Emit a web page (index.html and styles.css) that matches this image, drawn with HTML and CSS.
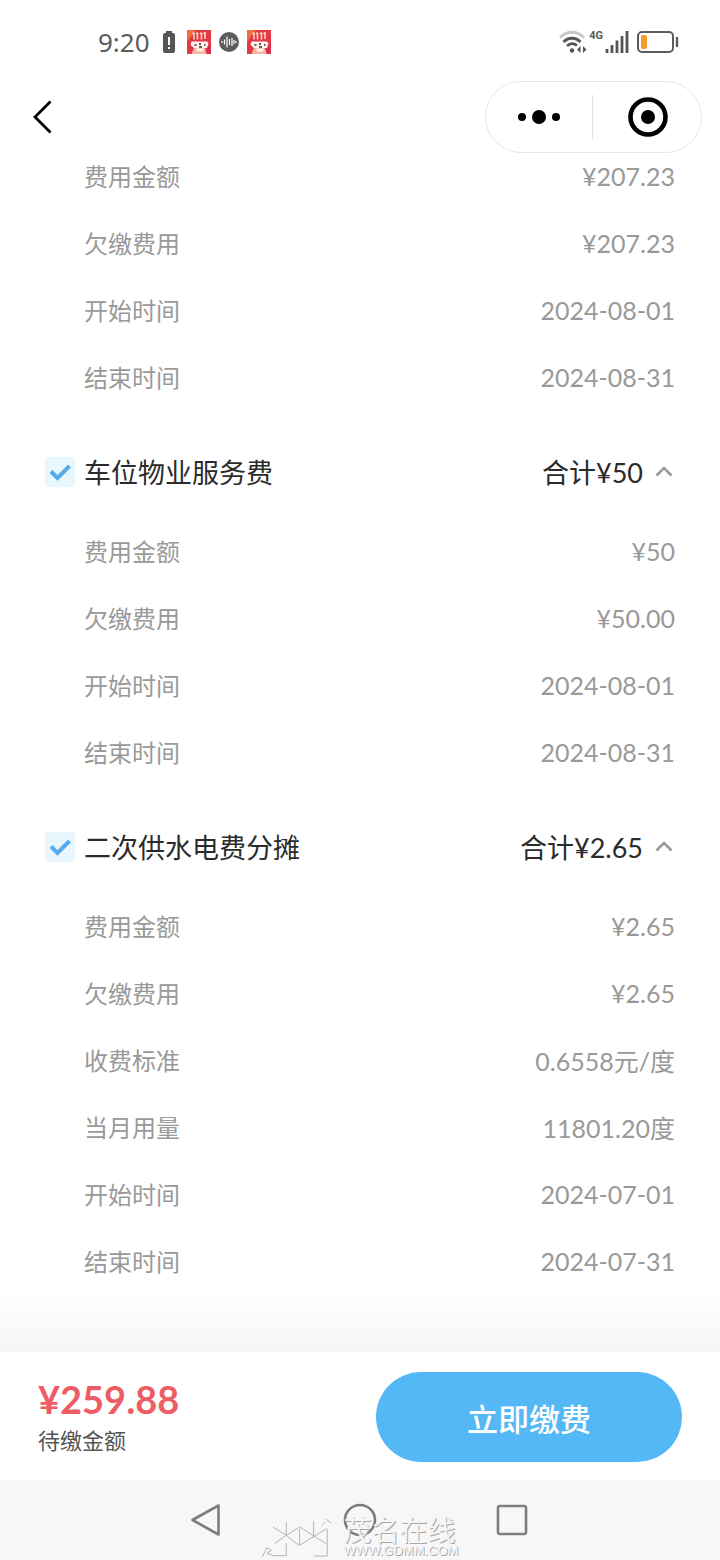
FILE: index.html
```html
<!DOCTYPE html>
<html lang="zh-CN">
<head>
    <meta charset="UTF-8">
    <meta name="viewport" content="width=device-width, initial-scale=1.0">
    <title>物业缴费</title>
    <link rel="stylesheet" href="styles.css">
</head>
<body>
    <svg class="sprite" width="0" height="0" aria-hidden="true">
        <symbol id="icon-sale" viewBox="0 0 24 24">
            <rect width="24" height="24" fill="#e23a44"/>
            <path d="M0 0h9L0 12z" fill="#f0703f"/>
            <path d="M24 12v12H14z" fill="#d92f4c"/>
            <path d="M7 2.500v7M10.500 2.500v7M14.500 2.500v7M18 2v7M5.500 4l1.500-1.500M9 4l1.500-1.500M13 4l1.500-1.500M16.500 4L18 2.500" fill="none" stroke="#ffd9c4" stroke-width="1.500"/>
            <path d="M4.500 11.500h15.500l1.500 2-1.500 4.500H7L3.500 15z" fill="#fff4ee"/>
            <path d="M7 18h11l1.500 6H4.500z" fill="#f9b5a4"/>
            <path d="M9 18.500h8l-1 3h-6z" fill="#fff0ea"/>
            <path d="M7.500 15h2M12 14h2M12 17h3M17 15h1.500" stroke="#3f2526" stroke-width="1.600"/>
        </symbol>
        <symbol id="icon-check" viewBox="0 0 30 30">
            <path d="M6 14.500l6.500 6.500L24.500 9" fill="none" stroke="#56aaea" stroke-width="4"/>
        </symbol>
        <symbol id="icon-up" viewBox="0 0 18 12">
            <path d="M1.500 9.500L9 2l7.500 7.500" fill="none" stroke="#999" stroke-width="2.600"/>
        </symbol>
    </svg>

    <!-- Status bar -->
    <div class="status-bar">
        <div class="status-group">
            <span class="clock">9:20</span>
            <svg width="17" height="24" viewBox="0 0 17 24">
                <path d="M4 1h6v2H4z" fill="#555"/>
                <rect x="1" y="3" width="12" height="20" rx="2" fill="#555"/>
                <path d="M7 7v8M7 17v2" stroke="#fff" stroke-width="2"/>
            </svg>
            <svg width="24" height="24"><use href="#icon-sale"/></svg>
            <svg width="20" height="22" viewBox="0 0 20 22">
                <circle cx="10" cy="11" r="10" fill="#5c5c5c"/>
                <path d="M3 10v2M5.500 8.500v5M8 5.500v11M10.500 8v6M13 7v8M15 9v4M17 10v2" stroke="#fff" stroke-width="1.200"/>
            </svg>
            <svg width="24" height="24"><use href="#icon-sale"/></svg>
        </div>
        <div class="status-group status-right">
            <svg width="28" height="24" viewBox="0 0 28 24">
                <g fill="none" stroke-width="2.800">
                    <path d="M1 7.500C8 .500 18 .500 25 7.500" stroke="#c8c8c8"/>
                    <path d="M4.500 12c5-5 12-5 17 0M8 16c3-3 7-3 10-.500" stroke="#555"/>
                </g>
                <circle cx="13" cy="20.500" r="2.200" fill="#555"/>
                <path d="M21.500 16v7l-3.500-3.500zM24 16v7l3.500-3.500z" fill="#555"/>
            </svg>
            <span class="network">4G</span>
            <svg class="signal" width="24" height="24" viewBox="0 0 24 24">
                <path d="M2 19v4M7 15v8M12 10.500V23M17 6v17M22 1v22" stroke="#555" stroke-width="2.800"/>
            </svg>
            <svg class="battery" width="42" height="24" viewBox="0 0 42 24">
                <rect x="1" y="2" width="35" height="20" rx="4" fill="none" stroke="#5c5c5c" stroke-width="2"/>
                <rect x="4" y="5" width="6" height="14" rx="2" fill="#f89a30"/>
                <path d="M40 7v10" stroke="#5c5c5c" stroke-width="2.400"/>
            </svg>
        </div>
    </div>

    <!-- Navigation bar with the capsule menu -->
    <header class="nav-bar">
        <button class="back" aria-label="返回">
            <svg width="22" height="36" viewBox="0 0 22 36">
                <path d="M19.500 2.500L4 18l15.500 15.500" fill="none" stroke="#000" stroke-width="2.800"/>
            </svg>
        </button>
        <div class="capsule">
            <button aria-label="更多">
                <svg width="44" height="16" viewBox="0 0 44 16">
                    <circle cx="5" cy="8" r="4"/>
                    <circle cx="22" cy="8" r="7"/>
                    <circle cx="39" cy="8" r="4"/>
                </svg>
            </button>
            <button aria-label="关闭">
                <svg width="40" height="40" viewBox="0 0 40 40">
                    <circle cx="20" cy="20" r="17.500" fill="none" stroke="#000" stroke-width="4.600"/>
                    <circle cx="20" cy="20" r="7"/>
                </svg>
            </button>
        </div>
    </header>

    <!-- Bill list, scrolled to the end -->
    <main class="bills">
        <section class="bill">
            <dl>
                <div><dt>费用金额</dt><dd>¥207.23</dd></div>
                <div><dt>欠缴费用</dt><dd>¥207.23</dd></div>
                <div><dt>开始时间</dt><dd>2024-08-01</dd></div>
                <div><dt>结束时间</dt><dd>2024-08-31</dd></div>
            </dl>
        </section>

        <section class="bill">
            <div class="bill-head">
                <label class="bill-name">
                    <input type="checkbox" checked>
                    <svg class="tick" width="30" height="30"><use href="#icon-check"/></svg>
                    车位物业服务费
                </label>
                <button class="total">合计¥50 <svg width="18" height="12"><use href="#icon-up"/></svg></button>
            </div>
            <dl>
                <div><dt>费用金额</dt><dd>¥50</dd></div>
                <div><dt>欠缴费用</dt><dd>¥50.00</dd></div>
                <div><dt>开始时间</dt><dd>2024-08-01</dd></div>
                <div><dt>结束时间</dt><dd>2024-08-31</dd></div>
            </dl>
        </section>

        <section class="bill">
            <div class="bill-head">
                <label class="bill-name">
                    <input type="checkbox" checked>
                    <svg class="tick" width="30" height="30"><use href="#icon-check"/></svg>
                    二次供水电费分摊
                </label>
                <button class="total">合计¥2.65 <svg width="18" height="12"><use href="#icon-up"/></svg></button>
            </div>
            <dl>
                <div><dt>费用金额</dt><dd>¥2.65</dd></div>
                <div><dt>欠缴费用</dt><dd>¥2.65</dd></div>
                <div><dt>收费标准</dt><dd>0.6558元/度</dd></div>
                <div><dt>当月用量</dt><dd>11801.20度</dd></div>
                <div><dt>开始时间</dt><dd>2024-07-01</dd></div>
                <div><dt>结束时间</dt><dd>2024-07-31</dd></div>
            </dl>
        </section>
        <div class="fade"></div>
    </main>

    <!-- Payment bar -->
    <footer class="pay-bar">
        <div class="pay-info">
            <div class="amount">¥259.88</div>
            <div class="amount-label">待缴金额</div>
        </div>
        <button class="pay-button">立即缴费</button>
    </footer>

    <!-- System navigation -->
    <nav class="system-nav">
        <button aria-label="后退">
            <svg width="36" height="36" viewBox="0 0 36 36"><path d="M28.500 3.500v29L2.500 18z"/></svg>
        </button>
        <button aria-label="主屏幕">
            <svg width="36" height="36" viewBox="0 0 36 36"><circle cx="18" cy="18" r="15"/></svg>
        </button>
        <button aria-label="最近任务">
            <svg width="36" height="36" viewBox="0 0 36 36"><rect x="4" y="4" width="28" height="28" rx="2"/></svg>
        </button>
        <div class="watermark">
            <svg width="70" height="40" viewBox="21 48 210 120">
                <path d="M23 165l14-28 14 8-14 8 16 7M53 161h42v-38M95 60v40M55 75l40 25 40-25M60 125l35-25 38 30M135 80v50l80-50M135 75l80 50M177 58v50M178 162h40V80M200 72l13-12M215 52l16 12"/>
            </svg>
            <div>
                <div class="watermark-name">茂名在线</div>
                <div class="watermark-url">WWW.GDMM.COM</div>
            </div>
        </div>
    </nav>
</body>
</html>
```
FILE: styles.css
```css
* {
    box-sizing: border-box;
}

body {
    margin: 0;
    height: 100vh;
    display: flex;
    flex-direction: column;
    background: #fff;
    color: #2b2b2b;
    font-family: Lato, "Noto Sans CJK SC", sans-serif;
}

button {
    padding: 0;
    border: none;
    background: none;
    color: inherit;
    font: inherit;
    cursor: pointer;
}

svg {
    display: block;
    flex: none;
}

dl, dd {
    margin: 0;
}

.sprite {
    position: absolute;
}

/* Status bar */
.status-bar {
    display: flex;
    justify-content: space-between;
    align-items: center;
    height: 81px;
    padding: 3px 41px 0 98px;
    color: #5c5c5c;
}

.status-group {
    display: flex;
    align-items: center;
    gap: 8px;
}

.clock {
    margin-right: 4px;
    font-family: "Noto Sans", sans-serif;
    font-size: 26px;
    line-height: 32px;
}

.status-right {
    gap: 2px;
}

.network {
    align-self: flex-start;
    font-family: Roboto, sans-serif;
    font-size: 11px;
    line-height: 12px;
    font-weight: bold;
}

.battery {
    margin-left: 6px;
}

/* Navigation bar */
.nav-bar {
    display: flex;
    justify-content: space-between;
    align-items: flex-start;
    height: 84px;
    padding: 0 18px 0 31px;
}

.back {
    padding: 18px 0;
}

.capsule {
    display: flex;
    align-items: center;
    width: 217px;
    height: 72px;
    border: 1px solid #e6e6e6;
    border-radius: 36px;
}

.capsule button {
    flex: 1;
    display: flex;
    justify-content: center;
    align-items: center;
    height: 44px;
}

.capsule button + button {
    padding-left: 3px;
    border-left: 1px solid #e0e0e0;
}

/* Bills */
.bills {
    flex: 1;
    min-height: 0;
    display: flex;
    flex-direction: column;
    justify-content: flex-end;
    overflow: hidden;
}

.bill {
    padding: 0 45px;
}

.bill dl {
    padding: 0 0 0 39px;
}

.bill dl div {
    display: flex;
    justify-content: space-between;
    align-items: center;
    height: 67px;
    color: #999;
    font-size: 24px;
}

.bill dd {
    font-size: 25px;
}

.bill-head {
    display: flex;
    justify-content: space-between;
    align-items: center;
    height: 91px;
    margin-top: 16px;
    font-size: 27px;
}

.bill-name {
    display: flex;
    align-items: center;
    gap: 9px;
}

.bill-name input {
    position: absolute;
    opacity: 0;
}

.tick {
    border-radius: 3px;
    background: #e8f7fe;
}

.bill-name input:not(:checked) + .tick use {
    display: none;
}

.total {
    display: flex;
    align-items: center;
    gap: 12px;
    padding-right: 2px;
}

.fade {
    flex: none;
    height: 58px;
    background: linear-gradient(#fff, #f5f5f5);
}

/* Payment bar */
.pay-bar {
    display: flex;
    justify-content: space-between;
    align-items: center;
    height: 128px;
    padding: 2px 38px 0;
}

.pay-info {
    padding-top: 4px;
}

.amount {
    color: #ee5c66;
    font-size: 38px;
    line-height: 44px;
    font-weight: bold;
}

.amount-label {
    color: #555;
    font-size: 22px;
    line-height: 40px;
}

.pay-button {
    width: 306px;
    height: 90px;
    border-radius: 45px;
    background: #54b8f6;
    color: #fff;
    font-size: 31px;
    font-weight: 500;
}

/* System navigation */
.system-nav {
    position: relative;
    display: flex;
    justify-content: center;
    align-items: center;
    gap: 116px;
    height: 80px;
    background: #f7f7f7;
}

.system-nav button svg {
    fill: none;
    stroke: #7d7d7d;
    stroke-width: 2.6;
    stroke-linejoin: round;
}

.watermark {
    position: absolute;
    bottom: 2px;
    left: 50%;
    display: flex;
    align-items: flex-end;
    gap: 12px;
    transform: translateX(-50%);
    color: #f5f5f5;
    text-shadow: 1px 1px 0 #a8a8a8;
    pointer-events: none;
}

.watermark svg {
    fill: none;
    stroke: #b4b4b4;
    stroke-width: 3;
}

.watermark-name {
    font-size: 28px;
    line-height: 28px;
}

.watermark-url {
    font-family: "Liberation Sans", sans-serif;
    font-size: 13px;
    line-height: 14px;
}
```
